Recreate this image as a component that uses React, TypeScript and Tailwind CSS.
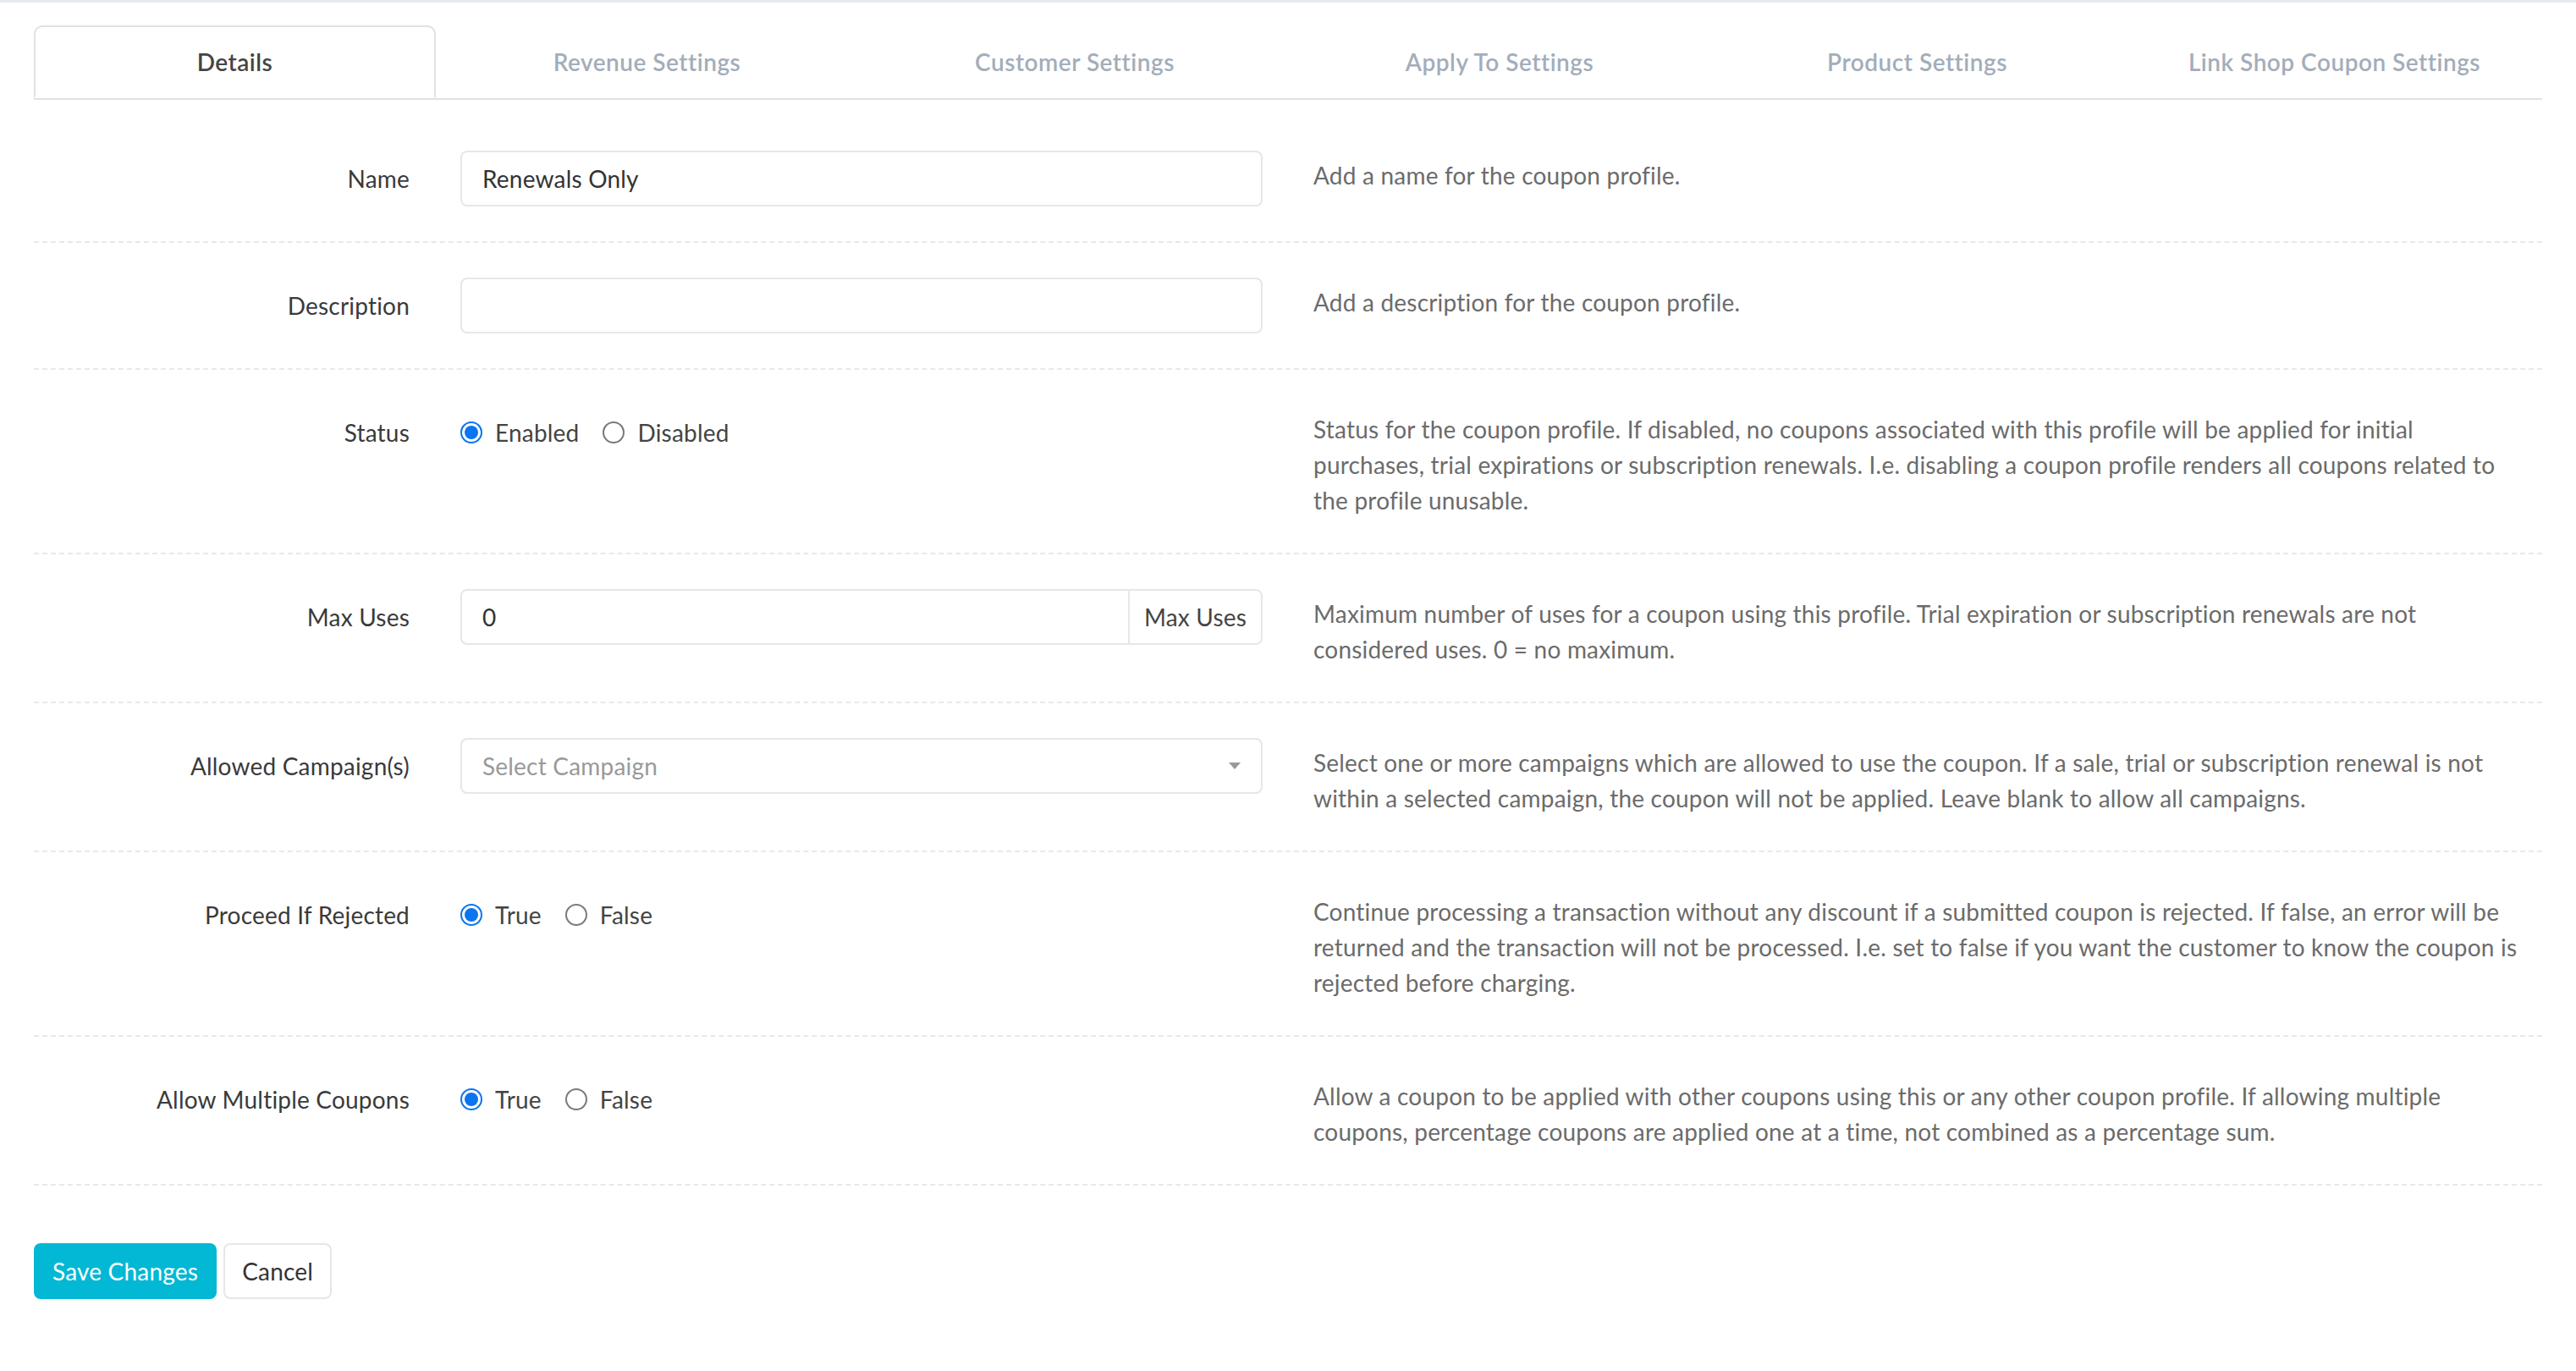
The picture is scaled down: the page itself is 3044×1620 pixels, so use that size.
import { useState } from "react";

const tabs = [
  { label: "Details", width: "w-[475px]" },
  { label: "Revenue Settings", width: "w-[499px]" },
  { label: "Customer Settings", width: "w-[512px]" },
  { label: "Apply To Settings", width: "w-[492px]" },
  { label: "Product Settings", width: "w-[495px]" },
  { label: "Link Shop Coupon Settings", width: "flex-1" },
];

function Radio({ checked, label, onClick }: { checked: boolean; label: string; onClick: () => void }) {
  return (
    <button type="button" onClick={onClick} className="flex items-center gap-[15px]">
      {checked ? (
        <span className="w-[26px] h-[26px] rounded-full border-2 border-[#0b74ef] flex items-center justify-center">
          <span className="w-[16px] h-[16px] rounded-full bg-[#0b74ef]" />
        </span>
      ) : (
        <span className="w-[26px] h-[26px] rounded-full border-2 border-[#7a7a7a]" />
      )}
      <span className="text-[#444]">{label}</span>
    </button>
  );
}

function RadioPair({ a, b }: { a: string; b: string }) {
  const [value, setValue] = useState(a);
  return (
    <div className="flex items-center gap-[28px] h-[42px] mt-[12px]">
      <Radio checked={value === a} label={a} onClick={() => setValue(a)} />
      <Radio checked={value === b} label={b} onClick={() => setValue(b)} />
    </div>
  );
}

// help text is kept line by line so it breaks where the original does
function Row({ label, children, help }: { label: string; children: React.ReactNode; help: string[] }) {
  return (
    <div className="grid grid-cols-[444px_948px_1fr] gap-x-[60px] py-[41px] border-b-2 border-dashed border-[#e6e9ec]">
      <div className="text-right text-[#3a3a3a] pt-[12px]">{label}</div>
      <div>{children}</div>
      <div className="pt-[8px] pr-[20px] text-[#6b6b6b]">
        {help.map((line) => (
          <span key={line} className="block whitespace-nowrap">
            {line}
          </span>
        ))}
      </div>
    </div>
  );
}

const inputCls =
  "w-full h-[66px] px-[24px] rounded-[8px] border-2 border-[#e4e7ea] bg-white text-[#333] outline-none";

export default function App() {
  const [name, setName] = useState("Renewals Only");
  const [desc, setDesc] = useState("");
  const [maxUses, setMaxUses] = useState("0");

  return (
    <div
      className="min-h-screen bg-white border-t-[3px] border-[#e6eaee] text-[28px] leading-[42px] tracking-[0.2px]"
      style={{ fontFamily: "Lato, 'Noto Sans', sans-serif" }}
    >
      <div className="px-[40px] pt-[27px]">
        {/* Tabs */}
        <div className="flex border-b-2 border-[#dee2e6]">
          {tabs.map((t, i) => (
            <div
              key={t.label}
              className={
                i === 0
                  ? `${t.width} h-[86px] -mb-[2px] flex items-center justify-center rounded-t-[10px] border-2 border-[#dee2e6] border-b-white bg-white font-semibold tracking-[0.5px] text-[#444]`
                  : `${t.width} h-[86px] flex items-center justify-center font-semibold tracking-[0.5px] text-[#a3adba]`
              }
            >
              {t.label}
            </div>
          ))}
        </div>

        {/* Form */}
        <div className="pt-[19px]">
          <Row label="Name" help={["Add a name for the coupon profile."]}>
            <input className={inputCls} value={name} onChange={(e) => setName(e.target.value)} />
          </Row>
          <Row label="Description" help={["Add a description for the coupon profile."]}>
            <input className={inputCls} value={desc} onChange={(e) => setDesc(e.target.value)} />
          </Row>
          <Row
            label="Status"
            help={[
              "Status for the coupon profile. If disabled, no coupons associated with this profile will be applied for initial",
              "purchases, trial expirations or subscription renewals. I.e. disabling a coupon profile renders all coupons related to",
              "the profile unusable.",
            ]}
          >
            <RadioPair a="Enabled" b="Disabled" />
          </Row>
          <Row
            label="Max Uses"
            help={[
              "Maximum number of uses for a coupon using this profile. Trial expiration or subscription renewals are not",
              "considered uses. 0 = no maximum.",
            ]}
          >
            <div className="flex h-[66px] rounded-[8px] border-2 border-[#e4e7ea] overflow-hidden">
              <input
                className="flex-1 min-w-0 px-[24px] text-[#333] outline-none"
                value={maxUses}
                onChange={(e) => setMaxUses(e.target.value)}
              />
              <div className="w-[157px] border-l-2 border-[#e4e7ea] flex items-center justify-center text-[#444]">
                Max Uses
              </div>
            </div>
          </Row>
          <Row
            label="Allowed Campaign(s)"
            help={[
              "Select one or more campaigns which are allowed to use the coupon. If a sale, trial or subscription renewal is not",
              "within a selected campaign, the coupon will not be applied. Leave blank to allow all campaigns.",
            ]}
          >
            <div className="h-[66px] rounded-[8px] border-2 border-[#e4e7ea] flex items-center justify-between pl-[24px] pr-[24px]">
              <span className="text-[#999]">Select Campaign</span>
              <svg width="14" height="8" viewBox="0 0 14 8">
                <polygon points="0,0 14,0 7,8" fill="#999" />
              </svg>
            </div>
          </Row>
          <Row
            label="Proceed If Rejected"
            help={[
              "Continue processing a transaction without any discount if a submitted coupon is rejected. If false, an error will be",
              "returned and the transaction will not be processed. I.e. set to false if you want the customer to know the coupon is",
              "rejected before charging.",
            ]}
          >
            <RadioPair a="True" b="False" />
          </Row>
          <Row
            label="Allow Multiple Coupons"
            help={[
              "Allow a coupon to be applied with other coupons using this or any other coupon profile. If allowing multiple",
              "coupons, percentage coupons are applied one at a time, not combined as a percentage sum.",
            ]}
          >
            <RadioPair a="True" b="False" />
          </Row>
        </div>

        {/* Actions */}
        <div className="flex gap-[8px] mt-[68px]">
          <button className="h-[66px] px-[22px] rounded-[8px] bg-[#03b8d4] text-white">Save Changes</button>
          <button className="h-[66px] px-[20px] rounded-[8px] border-2 border-[#e4e7ea] bg-white text-[#333]">
            Cancel
          </button>
        </div>
      </div>
    </div>
  );
}
